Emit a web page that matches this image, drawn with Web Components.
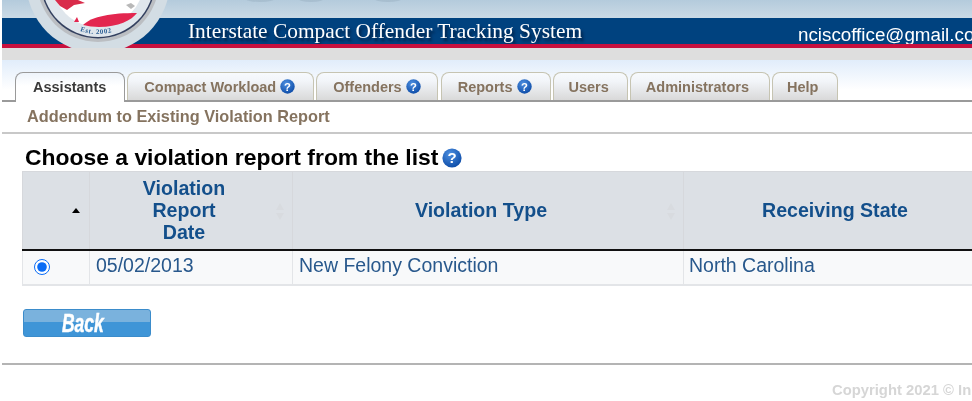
<!DOCTYPE html>
<html lang="en">
<head>
<meta charset="utf-8">
<title>Interstate Compact Offender Tracking System</title>
<style>
  html, body { margin: 0; padding: 0; background: #fff; overflow: hidden; }
  body { font-family: "Liberation Sans", Arial, sans-serif; width: 972px; height: 401px; }
</style>
</head>
<body>
<ic-page>
  <ic-header slot="header" title-text="Interstate Compact Offender Tracking System" email="nciscoffice@gmail.com"></ic-header>
  <ic-tabs slot="tabs">
    <ic-tab active style="padding: 0 18px 0 17px">Assistants</ic-tab>
    <ic-tab help style="padding: 0 18px 0 16px">Compact Workload</ic-tab>
    <ic-tab help style="padding: 0 16px 0 16px; margin-right: 1px">Offenders</ic-tab>
    <ic-tab help style="padding: 0 18px 0 16px">Reports</ic-tab>
    <ic-tab style="padding: 0 18px 0 15px">Users</ic-tab>
    <ic-tab style="padding: 0 20px 0 15px">Administrators</ic-tab>
    <ic-tab style="padding: 0 19px 0 14px">Help</ic-tab>
  </ic-tabs>
  <ic-subhead slot="subhead">Addendum to Existing Violation Report</ic-subhead>
  <ic-report-list slot="content"></ic-report-list>
  <ic-back-button slot="content">Back</ic-back-button>
  <ic-footer slot="footer">Copyright 2021 © In</ic-footer>
</ic-page>

<script>
class IcPage extends HTMLElement {
    constructor() {
        super();
        this.attachShadow({ mode: 'open' });
        this.shadowRoot.innerHTML = `
      <style>
        :host { display: block; width: 972px; height: 401px; overflow: hidden; background: #fff; filter: blur(.3px); }
        .content { padding: 0 0 0 20px; }
      </style>
      <slot name="header"></slot>
      <slot name="tabs"></slot>
      <slot name="subhead"></slot>
      <div class="content"><slot name="content"></slot></div>
      <slot name="footer"></slot>
    `;
    }
}

class IcHeader extends HTMLElement {
    constructor() {
        super();
        this.attachShadow({ mode: 'open' });
        this.shadowRoot.innerHTML = `
      <style>
        :host { display: block; position: relative; margin-left: 2px; }
        .sky { height: 18px; background: linear-gradient(#b4cbdc, #cbdae5); position: relative; overflow: hidden; }
        .sky i { position: absolute; top: -5px; height: 7px; border-radius: 50%; background: #8fa6b8; opacity: .35; }
        .band {
          height: 26px; background: #00427f; display: grid; grid-template-columns: 610px 1fr;
          padding-left: 186px; align-items: center; color: #fff; overflow: hidden;
        }
        .title {
          font-family: "Liberation Serif", "Times New Roman", serif; font-size: 21.4px; white-space: nowrap;
          text-shadow: 2px 3px 3px rgba(0, 15, 40, .75); position: relative; z-index: 2;
        }
        .email { font-size: 18.8px; white-space: nowrap; position: relative; top: 4px; }
        .red { height: 4px; background: #c8103e; }
        .grey { height: 12px; background: #dedede; }
        svg { position: absolute; left: -2px; top: 0; }
      </style>
      <div class="sky"><i style="left:243px;width:30px"></i><i style="left:296px;width:26px"></i><i style="left:372px;width:28px"></i></div>
      <div class="band">
        <span class="title">${this.getAttribute('title-text')}</span>
        <span class="email">${this.getAttribute('email')}</span>
      </div>
      <div class="red"></div>
      <div class="grey"></div>
      <svg width="200" height="48" viewBox="0 0 200 48" aria-hidden="true">
        <defs>
          <path id="est" d="M80 31 A 53 53 0 0 0 118 30"/>
        </defs>
        <circle cx="98" cy="-19" r="72" fill="#d3dde4"/>
        <circle cx="98" cy="-19" r="61" fill="#bbbec2"/>
        <circle cx="98" cy="-19" r="57.5" fill="#33405f"/>
        <circle cx="98" cy="-19" r="56" fill="#dfe6ec"/>
        <circle cx="98" cy="-19" r="46" fill="#fff"/>
        <path d="M83 25 C92 16 112 13 137 13 C132 20 118 27 99 27 C93 27 88 26 83 25Z" fill="#e3264f"/>
        <path d="M55 0 L78 0 L85 3 L74 5 L67 10 L60 6Z" fill="#d92b4a"/>
        <path d="M74 22 L77 17 L79 22Z" fill="#e3264f"/>
        <path d="M126 5 l5 -2 l4 3 l-4 3Z" fill="#9a9a9a" opacity=".7"/>
        <text font-family="Liberation Serif, serif" font-weight="700" font-size="7" fill="#2c5f94" letter-spacing=".6"><textPath href="#est">Est. 2002</textPath></text>
      </svg>
    `;
    }
}

class IcTabs extends HTMLElement {
    constructor() {
        super();
        this.attachShadow({ mode: 'open' });
        this.shadowRoot.innerHTML = `
      <style>
        :host {
          display: block; margin-left: 2px; height: 42px; box-sizing: border-box;
          background: linear-gradient(#e1edfb, #fff 30px);
        }
        .row {
          display: flex; gap: 2px; height: 42px; box-sizing: border-box; padding: 12px 0 0 13px;
          border-bottom: 2px solid #9a9a9a;
        }
      </style>
      <div class="row"><slot></slot></div>
    `;
    }
}

class IcHelpIcon extends HTMLElement {
    constructor() {
        super();
        this.attachShadow({ mode: 'open' });
        const size = this.getAttribute('size') || 15;
        this.shadowRoot.innerHTML = `
      <style>
        :host { display: inline-block; width: ${size}px; height: ${size}px; flex: none; line-height: 0; }
      </style>
      <svg width="${size}" height="${size}" viewBox="0 0 20 20">
        <defs>
          <radialGradient id="g" cx="40%" cy="30%" r="75%">
            <stop offset="0" stop-color="#4d8fe0"/>
            <stop offset="1" stop-color="#0b4aa6"/>
          </radialGradient>
        </defs>
        <circle cx="10" cy="10" r="9.6" fill="url(#g)"/>
        <text x="10" y="15.4" text-anchor="middle" font-family="Liberation Sans, sans-serif" font-weight="700" font-size="15" fill="#fff">?</text>
      </svg>
    `;
    }
}

class IcTab extends HTMLElement {
    constructor() {
        super();
        this.attachShadow({ mode: 'open' });
        const help = this.hasAttribute('help') ? '<ic-help-icon></ic-help-icon>' : '';
        this.shadowRoot.innerHTML = `
      <style>
        :host {
          display: flex; align-items: center; gap: 4px; height: 27px; box-sizing: content-box;
          padding: 0 17px; border: 1px solid #c6c4b2; border-bottom: 0; border-radius: 8px 8px 0 0;
          background: linear-gradient(#f7fafd, #f2f5f9 30%, #d9d9d9);
          font: bold 14.5px "Liberation Sans", Arial, sans-serif; color: #85735f; white-space: nowrap;
        }
        :host([active]) {
          height: 29px; margin-bottom: -2px; border-color: #9a9a9a; color: #3a3a3a;
          background: linear-gradient(#eef4fb, #fff 45%); position: relative; z-index: 1;
        }
        slot { display: block; }
        :host([active]) slot { margin-bottom: 2px; }
      </style>
      <slot></slot>${help}
    `;
    }
}

class IcSubhead extends HTMLElement {
    constructor() {
        super();
        this.attachShadow({ mode: 'open' });
        this.shadowRoot.innerHTML = `
      <style>
        :host {
          display: block; margin-left: 2px; height: 30px; box-sizing: content-box; padding-left: 25px;
          border-bottom: 2px solid #c8c8c8;
          font: bold 16.3px/29px "Liberation Sans", Arial, sans-serif; color: #85735f;
        }
      </style>
      <slot></slot>
    `;
    }
}

class IcReportList extends HTMLElement {
    constructor() {
        super();
        this.attachShadow({ mode: 'open' });
        this.shadowRoot.innerHTML = `
      <style>
        :host { display: block; width: 1000px; font-family: "Liberation Sans", Arial, sans-serif; }
        h2 {
          margin: 0; padding: 10px 0 0 5px; height: 27px; display: flex; align-items: center; gap: 4px;
          font-size: 22.9px; font-weight: 700; color: #000; line-height: 27px;
        }
        table { border-collapse: collapse; table-layout: fixed; width: 979px; margin-left: 2px; }
        th, td { border: 1px solid #d6d8dc; box-sizing: border-box; }
        th {
          height: 78px; background: #dce0e5; color: #134f8b; font-size: 19.6px; line-height: 22px;
          font-weight: 700; text-align: center; border-bottom: 2px solid #111; padding: 0 14px 1px 0; position: relative;
        }
        td {
          height: 35px; background: #f8f9fa; color: #28588c; font-size: 19.5px; padding: 0 0 3px 6px;
          border-color: #e3e5e8; border-bottom-width: 2px;
        }
        td:last-child { padding-left: 5px; }
        td.pick { padding: 0 0 0 11px; }
        input { width: 16px; height: 16px; margin: 0; display: block; accent-color: #0a6cf5; }
        .up { position: absolute; right: 9px; top: 36px; width: 0; height: 0;
          border: 4px solid transparent; border-top: 0; border-bottom: 5px solid #000; }
        .both { position: absolute; right: 8px; top: 31px; width: 8px; height: 17px; }
      </style>
      <h2>Choose a violation report from the list <ic-help-icon size="20"></ic-help-icon></h2>
      <table>
        <colgroup><col style="width:67px"><col style="width:203px"><col style="width:391px"><col></colgroup>
        <thead>
          <tr>
            <th><span class="up"></span></th>
            <th>Violation<br>Report<br>Date<svg class="both" viewBox="0 0 8 17"><path d="M4 0l4 7H0zM4 17l4-7H0z" fill="#d8dbdf"/></svg></th>
            <th>Violation Type<svg class="both" viewBox="0 0 8 17"><path d="M4 0l4 7H0zM4 17l4-7H0z" fill="#d8dbdf"/></svg></th>
            <th>Receiving State</th>
          </tr>
        </thead>
        <tbody>
          <tr>
            <td class="pick"><input type="radio" name="report" checked aria-label="Select report"></td>
            <td>05/02/2013</td>
            <td>New Felony Conviction</td>
            <td>North Carolina</td>
          </tr>
        </tbody>
      </table>
    `;
    }
}

class IcBackButton extends HTMLElement {
    constructor() {
        super();
        this.attachShadow({ mode: 'open' });
        this.shadowRoot.innerHTML = `
      <style>
        :host {
          display: flex; align-items: center; justify-content: center; box-sizing: border-box;
          width: 128px; height: 28px; margin: 23px 0 0 3px; border: 1px solid #3b8ccb; border-radius: 3px;
          background: linear-gradient(#7ab2dd 0, #7ab2dd 46%, #3f95d7 46%, #3f95d7 100%);
        }
        span {
          display: block; font: italic 700 25px "Liberation Sans", Arial, sans-serif; color: #fff;
          -webkit-text-stroke: .5px #fff; transform: scaleX(.7); line-height: 26px; margin-right: 8px;
        }
      </style>
      <span><slot></slot></span>
    `;
    }
}

class IcFooter extends HTMLElement {
    constructor() {
        super();
        this.attachShadow({ mode: 'open' });
        this.shadowRoot.innerHTML = `
      <style>
        :host {
          display: block; margin: 26px 0 0 2px; border-top: 2px solid #b4b4b4; height: 36px; box-sizing: border-box;
          padding: 17px 0 0 830px; white-space: nowrap; overflow: hidden;
          font: bold 14.8px "Liberation Sans", Arial, sans-serif; color: #d6d6d6;
        }
      </style>
      <slot></slot>
    `;
    }
}

customElements.define('ic-page', IcPage);
customElements.define('ic-header', IcHeader);
customElements.define('ic-tabs', IcTabs);
customElements.define('ic-help-icon', IcHelpIcon);
customElements.define('ic-tab', IcTab);
customElements.define('ic-subhead', IcSubhead);
customElements.define('ic-report-list', IcReportList);
customElements.define('ic-back-button', IcBackButton);
customElements.define('ic-footer', IcFooter);
</script>
</body>
</html>
